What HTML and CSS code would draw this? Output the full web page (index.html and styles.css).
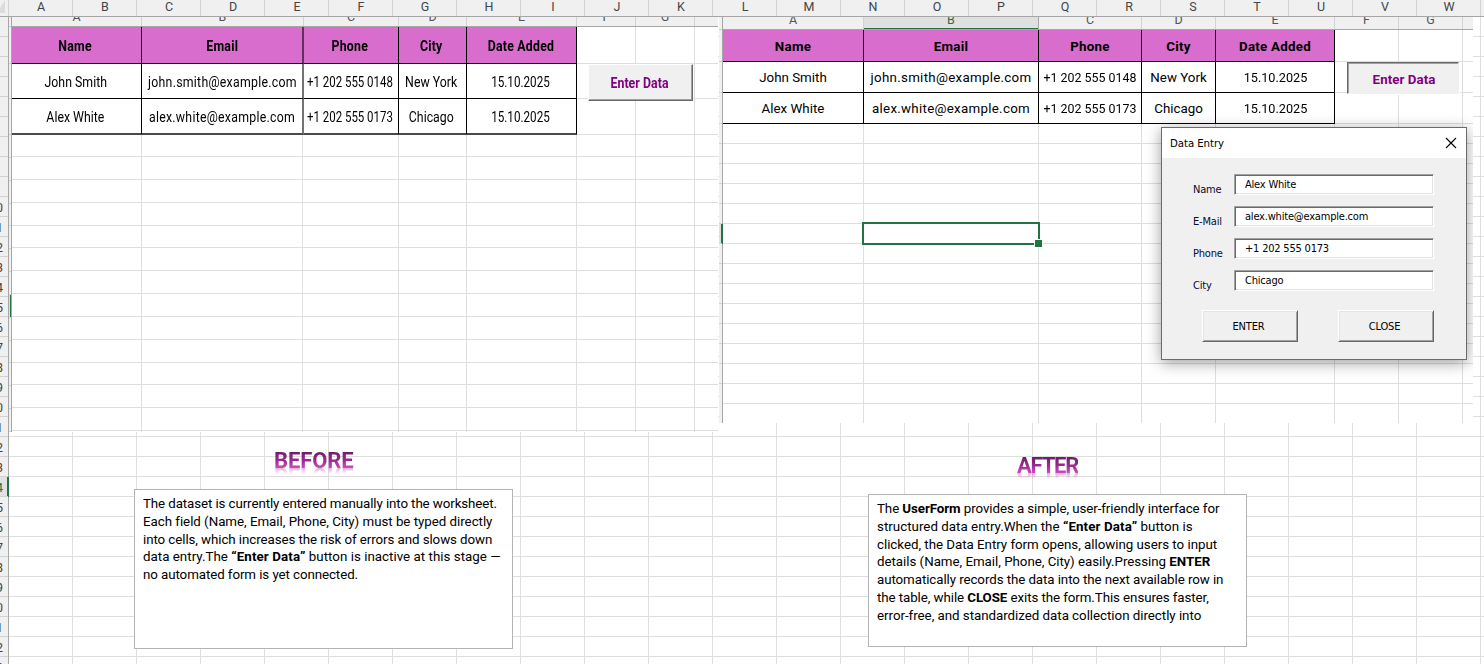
FILE: index.html
```html
<!DOCTYPE html>
<html lang="en">
<head>
<meta charset="utf-8">
<title>Data Entry</title>
<link rel="stylesheet" href="styles.css">
</head>
<body>
<main class="sheet">
  <div class="col-heads">
    <span class="corner"></span>
    <span>A</span><span>B</span><span>C</span><span>D</span><span>E</span><span>F</span><span>G</span><span>H</span><span>I</span><span>J</span><span>K</span><span>L</span><span>M</span><span>N</span><span>O</span><span>P</span><span>Q</span><span>R</span><span>S</span><span>T</span><span>U</span><span>V</span><span>W</span><span></span>
  </div>
  <div class="sheet-body">
    <div class="row-heads">
      <span></span><span></span><span></span><span></span><span></span><span></span><span></span><span></span><span></span><span>10</span><span>11</span><span>12</span><span>13</span><span>14</span><span>15</span><span>16</span><span>17</span><span>18</span><span>19</span><span>20</span><span>21</span><span>22</span><span>23</span><span class="active">24</span><span>25</span><span>26</span><span>27</span><span>28</span><span>29</span><span>30</span><span>31</span><span>32</span><span>33</span>
    </div>
    <div class="gridlines"></div>
  </div>

  <section class="shot before">
    <div class="shot-rows">
      <i></i><i></i><i></i><i></i><i></i><i></i><i></i><i></i><i></i><i></i><i></i><i class="active"></i><i></i><i></i><i></i><i></i><i></i>
    </div>
    <div class="shot-main">
      <div class="letters cols"><b><span>A</span></b><b><span>B</span></b><b><span>C</span></b><b><span>D</span></b><b><span>E</span></b><b><span>F</span></b><b><span>G</span></b><b></b></div>
      <div class="record head cols"><div><span>Name</span></div><div><span>Email</span></div><div><span>Phone</span></div><div><span>City</span></div><div><span>Date Added</span></div><div></div><div></div><div></div></div>
      <div class="record cols"><div><span>John Smith</span></div><div><span class="mail">john.smith@example.com</span></div><div><span class="tel">+1 202 555 0148</span></div><div><span>New York</span></div><div><span class="date">15.10.2025</span></div><div></div><div></div><div></div></div>
      <div class="record last cols"><div><span>Alex White</span></div><div><span class="mail">alex.white@example.com</span></div><div><span class="tel">+1 202 555 0173</span></div><div><span>Chicago</span></div><div><span class="date">15.10.2025</span></div><div></div><div></div><div></div></div>
      <div class="blank">
        <i></i><i></i><i></i><i></i><i></i><i></i><i></i><i></i><i></i><i></i><i></i><i></i><i></i>
      </div>
    </div>
    <button class="enter-data raised"><span>Enter Data</span></button>
  </section>

  <section class="shot after">
    <div class="shot-rows">
      <i></i><i></i><i></i><i></i><i></i><i></i><i></i><i></i><i></i><i class="active"></i><i></i><i></i><i></i><i></i><i></i><i></i><i></i><i></i>
    </div>
    <div class="shot-main">
      <div class="letters cols"><b><span>A</span></b><b class="active"><span>B</span></b><b><span>C</span></b><b><span>D</span></b><b><span>E</span></b><b><span>F</span></b><b><span>G</span></b><b></b></div>
      <div class="record head cols"><div><span>Name</span></div><div><span>Email</span></div><div><span>Phone</span></div><div><span>City</span></div><div><span>Date Added</span></div><div></div><div></div><div></div></div>
      <div class="record cols"><div><span>John Smith</span></div><div><span class="mail">john.smith@example.com</span></div><div><span class="tel">+1 202 555 0148</span></div><div><span>New York</span></div><div><span class="date">15.10.2025</span></div><div></div><div></div><div></div></div>
      <div class="record last cols"><div><span>Alex White</span></div><div><span class="mail">alex.white@example.com</span></div><div><span class="tel">+1 202 555 0173</span></div><div><span>Chicago</span></div><div><span class="date">15.10.2025</span></div><div></div><div></div><div></div></div>
      <div class="blank">
        <i></i><i></i><i></i><i></i><i></i><i></i><i></i><i></i><i></i><i></i><i></i><i></i><i></i><i></i>
      </div>
    </div>
    <div class="selection"></div>
    <button class="enter-data pressed"><span>Enter Data</span></button>
    <form class="dialog">
      <header><span>Data Entry</span>
        <svg width="12" height="12" viewBox="0 0 12 12"><path d="M1 1 11 11M11 1 1 11" stroke="#000" stroke-width="1.1" fill="none"/></svg>
      </header>
      <div class="fields">
        <label><span>Name</span><span class="box">Alex White</span></label>
        <label><span>E-Mail</span><span class="box">alex.white@example.com</span></label>
        <label><span>Phone</span><span class="box">+1 202 555 0173</span></label>
        <label><span>City</span><span class="box">Chicago</span></label>
      </div>
      <footer><button type="button">ENTER</button><button type="button">CLOSE</button></footer>
    </form>
  </section>

  <h2 class="title title-before">BEFORE</h2>
  <h2 class="title title-after">AFTER</h2>
  <p class="note note-before"><span class="l1">The dataset is currently entered manually into the worksheet.</span><br><span class="l2">Each field (Name, Email, Phone, City) must be typed directly</span><br>into cells, which increases the risk of errors and slows down<br><span class="l3">data entry.The <b>“Enter Data”</b> button is inactive at this stage —</span><br>no automated form is yet connected.</p>
  <p class="note note-after">The <b>UserForm</b> provides a simple, user-friendly interface for<br><span class="l3">structured data entry.When the <b>“Enter Data”</b> button is</span><br><span class="l2">clicked, the Data Entry form opens, allowing users to input</span><br><span class="l2">details (Name, Email, Phone, City) easily.Pressing <b>ENTER</b></span><br>automatically records the data into the next available row in<br>the table, while <b>CLOSE</b> exits the form.This ensures faster,<br><span class="l2">error-free, and standardized data collection directly into</span></p>
</main>
</body>
</html>
```
FILE: styles.css
```css
* { box-sizing: border-box; }
body { margin: 0; }
button { margin: 0; padding: 0; border: 0; font: inherit; color: inherit; }

.sheet {
  position: relative;
  width: 1484px;
  height: 664px;
  overflow: hidden;
  display: flex;
  flex-direction: column;
  background: #fff;
  font-family: Roboto, "Liberation Sans", sans-serif;
  font-size: 13.33px;
  color: #000;
}

/* worksheet headings */
.col-heads {
  flex: none;
  height: 17px;
  display: grid;
  grid-template-columns: 9px repeat(24, 64px);
  background: #f0f0f0;
  border-bottom: 1px solid #a6a6a6;
  color: #444;
  font-size: 12.5px;
  line-height: 13px;
  text-align: center;
}
.col-heads span { border-right: 1px solid #d2d2d2; padding-left: 1px; }
.col-heads .corner { position: relative; }
.corner::before {
  content: "";
  position: absolute;
  left: 0;
  top: 0;
  width: 5px;
  height: 13px;
  background: #dcdcdc;
  clip-path: polygon(100% 0, 100% 100%, 0 100%, 0 60%);
}
.sheet-body { flex: 1; display: flex; min-height: 0; }
.row-heads {
  width: 9px;
  background: #f0f0f0;
  border-right: 1px solid #a6a6a6;
  color: #444;
}
.row-heads span {
  height: 20px;
  display: flex;
  justify-content: flex-end;
  padding-right: 5px;
  border-bottom: 1px solid #d2d2d2;
  font-size: 12.5px;
  line-height: 21px;
}
.row-heads .active {
  position: relative;
  background: #e1e1e1;
  color: #217346;
  box-shadow: inset -1px 0 #217346, 1px 0 #217346;
}
.gridlines {
  flex: 1;
  background:
    repeating-linear-gradient(to right, transparent 0 63px, #dedede 63px 64px),
    repeating-linear-gradient(to bottom, transparent 0 19px, #dedede 19px 20px);
}

/* pasted worksheet pictures */
.shot { position: absolute; top: 17px; display: flex; background: #fff; }
.before { left: 9px; width: 709px; height: 415px; }
.after { left: 719px; width: 754px; height: 406px; }
.shot-rows {
  flex: none;
  display: flex;
  flex-direction: column;
  background: #f0f0f0;
  border-right: 1px solid #a6a6a6;
}
.shot-rows i { flex: none; border-bottom: 1px solid #d2d2d2; }
.before .shot-rows { width: 3px; overflow: hidden; }
.after .shot-rows { width: 4px; }
.shot-main { flex: 1; min-width: 0; display: flex; flex-direction: column; }
.cols { display: grid; flex: none; }
.before .cols { grid-template-columns: 130px 162px 95px 68px 110px 59px 59px 23px; }
.after .cols { grid-template-columns: 141px 175px 103px 74px 119px 64px 64px 10px; }

.letters {
  background: #f0f0f0;
  border-bottom: 1px solid #a6a6a6;
  color: #555;
  overflow: hidden;
  font-size: 12.5px;
}
.letters b {
  font-weight: 400;
  text-align: center;
  border-right: 1px solid #d2d2d2;
  overflow: hidden;
}
.letters span { display: block; line-height: 15px; }
.letters b:last-child { border-right: 0; }
.before .letters { height: 10px; }
.before .letters span { margin-top: -8px; }
.after .letters { height: 13px; }
.after .letters span { margin-top: -5px; }
.letters .active { background: #e0e0e0; color: #217346; border-right-color: #a6a6a6; box-shadow: inset 0 -1px #217346; }

.record > div {
  display: flex;
  align-items: center;
  justify-content: center;
  border-right: 1px solid #000;
  border-bottom: 1px solid #000;
  white-space: nowrap;
}
.record > div:nth-child(n+6) { border-color: #dedede; }
.record > div:last-child { border-right: 0; }
.head > div { font-weight: 700; letter-spacing: .25px; }
.head > div:nth-child(-n+5) { background: #d86dcd; }
.mail { letter-spacing: .28px; }
.tel, .date { margin: 0 -6px; }
.tel { transform: scaleX(.93); }
.date { transform: scaleX(.95); }
.before .record { height: 35px; }
.before .record.head { height: 37px; }
.before .record.last { height: 36px; }
.before .record > div { padding-right: 2px; }
.before .record span { transform: scale(.925, 1.13); }
.before .record .tel { transform: scale(.86, 1.13); }
.before .record .date { transform: scale(.875, 1.13); }
.before .record > div:nth-child(2) { border-right: 2px solid rgba(0, 0, 0, .55); padding-right: 0; }
.before .record.last > div:nth-child(-n+5) { border-bottom: 2px solid #4a4a4a; }
.after .record { height: 31px; }
.after .record.head { height: 32px; }
.after .record > div { padding-top: 1px; }

.blank { flex: 1; display: flex; flex-direction: column; background-repeat: no-repeat; background-size: 1px 100%; }
.blank i { border-bottom: 1px solid #dedede; flex: none; }
.before .blank i { height: 22.85px; }
.before .blank i:first-child { height: 22px; }
.after .blank i { height: 20px; }
.before .blank {
  background-image: linear-gradient(#dedede, #dedede), linear-gradient(#e2e2e2, #e2e2e2), linear-gradient(#dedede, #dedede), linear-gradient(#dedede, #dedede), linear-gradient(#dedede, #dedede), linear-gradient(#dedede, #dedede), linear-gradient(#dedede, #dedede);
  background-position: 129px 0, 290px 0, 386px 0, 454px 0, 564px 0, 623px 0, 682px 0;
}
.after .blank {
  background-image: linear-gradient(#dedede, #dedede), linear-gradient(#dedede, #dedede), linear-gradient(#dedede, #dedede), linear-gradient(#dedede, #dedede), linear-gradient(#dedede, #dedede), linear-gradient(#dedede, #dedede), linear-gradient(#dedede, #dedede);
  background-position: 140px 0, 315px 0, 418px 0, 492px 0, 611px 0, 675px 0, 739px 0;
}
.before .shot-rows i { height: 22.85px; }
.before .shot-rows i:nth-child(1) { height: 10px; }
.before .shot-rows i:nth-child(2) { height: 37px; }
.before .shot-rows i:nth-child(3) { height: 35px; }
.before .shot-rows i:nth-child(4) { height: 36px; }
.after .shot-rows i { height: 20px; }
.after .shot-rows i:nth-child(1) { height: 13px; }
.after .shot-rows i:nth-child(2) { height: 32px; }
.after .shot-rows i:nth-child(3), .after .shot-rows i:nth-child(4) { height: 31px; }
.after .shot-rows i:last-child { border-bottom: 0; }
.shot-rows .active { background: #e0e0e0; box-shadow: 1px 0 #217346, inset -1px 0 #217346; }

.selection {
  position: absolute;
  left: 143px;
  top: 205px;
  width: 178px;
  height: 23px;
  border: 2px solid #217346;
}
.selection::after {
  content: "";
  position: absolute;
  right: -5px;
  bottom: -5px;
  width: 7px;
  height: 7px;
  background: #217346;
  border: 1px solid #fff;
}

.enter-data { position: absolute; background: #f0f0f0; color: #800080; font-weight: 700; font-size: 13.33px; letter-spacing: .05px; }
.raised {
  left: 579px;
  top: 47px;
  width: 105px;
  height: 37px;
  border: 1px solid;
  border-color: #fff #696969 #696969 #fff;
  box-shadow: inset -1px -1px #a0a0a0;
  padding-right: 2px;
}
.raised span { display: block; transform: scale(.925, 1.13); }
.pressed {
  left: 628px;
  top: 45px;
  width: 112px;
  height: 32px;
  border: 1px solid;
  border-color: #696969 #f0f0f0 #f0f0f0 #696969;
  box-shadow: inset 1px 1px #a0a0a0, 1px 1px #fff;
  padding: 2px 0 0 2px;
}

/* entry form */
.dialog {
  position: absolute;
  left: 442px;
  top: 110px;
  width: 306px;
  height: 233px;
  display: flex;
  flex-direction: column;
  border: 1px solid #6b6b6b;
  background: #f0f0f0;
  box-shadow: 0 3px 14px rgba(0, 0, 0, .38);
  clip-path: inset(-24px -6px -24px -24px);
  font-family: "DejaVu Sans Condensed", "DejaVu Sans", sans-serif;
  font-size: 11px;
  letter-spacing: -.2px;
}
.dialog header {
  height: 30px;
  padding: 0 9px 0 8px;
  display: flex;
  align-items: center;
  justify-content: space-between;
  background: #fff;
  font-size: 11.3px;
  letter-spacing: -.05px;
}
.dialog header svg { margin-bottom: 1px; }
.fields { padding: 16px 0 0 31px; display: flex; flex-direction: column; gap: 11px; }
.fields label { display: flex; height: 21px; color: #0a0a30; }
.fields label > span:first-child { width: 41px; padding-top: 9px; line-height: 13px; }
.fields .box {
  width: 200px;
  padding-left: 10px;
  line-height: 20px;
  color: #000;
  background: #fff;
  border: 1px solid;
  border-color: #a0a0a0 #fff #fff #a0a0a0;
  box-shadow: inset 1px 1px #696969, inset -1px -1px #e3e3e3;
}
.dialog footer { display: flex; gap: 40px; padding: 19px 0 0 40px; }
.dialog footer button {
  width: 96px;
  height: 32px;
  padding-right: 3px;
  background: #f0f0f0;
  border: 1px solid;
  border-color: #fff #696969 #696969 #fff;
  box-shadow: inset 1px 1px #e3e3e3, inset -1px -1px #a0a0a0;
  letter-spacing: -.15px;
}

/* captions */
.title {
  position: absolute;
  margin: 0;
  font-size: 22px;
  line-height: 24px;
  font-weight: 700;
  color: transparent;
  background: linear-gradient(#6b1f6b 15%, #a02b93 50%, #c94fbd 80%);
  -webkit-background-clip: text;
  background-clip: text;
  -webkit-box-reflect: below -10px linear-gradient(transparent 55%, rgba(0, 0, 0, .5) 82%);
}
.title-before { left: 274px; top: 449px; letter-spacing: -.1px; }
.title-after { left: 1017px; top: 454px; letter-spacing: -1.2px; }

.note {
  position: absolute;
  width: 379px;
  margin: 0;
  padding: 5px 8px;
  background: #fff;
  border: 1px solid #b4b4b4;
  line-height: 17.8px;
  letter-spacing: -.08px;
  white-space: nowrap;
}
.note-before { left: 134px; top: 489px; height: 160px; }
.note-after { left: 868px; top: 494px; height: 153px; }
.l1 { letter-spacing: -.1px; }
.l2 { letter-spacing: -.03px; }
.l3 { letter-spacing: .02px; }
.l3 b { letter-spacing: .12px; }
```
